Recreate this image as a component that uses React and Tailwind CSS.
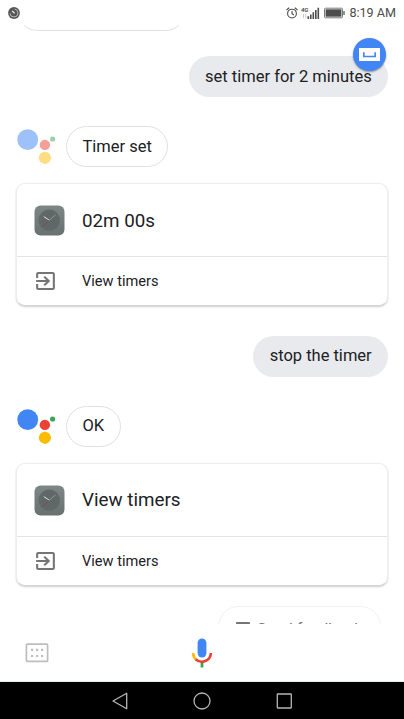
function AssistantLogo({ faded }) {
    return (
        <svg width="40" height="41" viewBox="0 0 40 41" className={`shrink-0 ${faded ? 'opacity-50' : ''}`}>
            <circle cx="11.7" cy="13.7" r="10.4" fill="#4285f4" />
            <circle cx="28.9" cy="18.9" r="5.2" fill="#ea4335" />
            <circle cx="36.6" cy="13" r="2.6" fill="#34a853" />
            <circle cx="28.9" cy="31.8" r="6.1" fill="#fbbc05" />
        </svg>
    )
}

function ClockIcon() {
    return (
        <svg width="31" height="31" viewBox="0 0 31 31" className="mt-px shrink-0">
            <defs>
                <linearGradient id="clock-bg" x1="0" y1="0" x2="0" y2="1">
                    <stop offset="0" stopColor="#7f8786" />
                    <stop offset="1" stopColor="#697170" />
                </linearGradient>
            </defs>
            <rect x="0.5" y="0.5" width="30" height="30" rx="6" fill="url(#clock-bg)" />
            <circle cx="15.3" cy="15.2" r="10.7" fill="#5f6767" />
            <circle cx="15.3" cy="15.2" r="9.7" fill="none" stroke="#7d8584" strokeWidth="0.8" strokeDasharray="0.7 4.38" />
            <path d="M9.8 11.6l5.5 3.6" stroke="#dcdfdf" strokeWidth="1" />
            <path d="M15.3 15.2l6.4-5.5" stroke="#a3a9a9" strokeWidth="0.7" />
            <path d="M15.3 15.2l-7 6.7" stroke="#8c4646" strokeWidth="0.9" />
        </svg>
    )
}

function OpenIcon() {
    return (
        <svg width="25" height="24" viewBox="0 0 24 24" preserveAspectRatio="none" fill="#757575" className="shrink-0">
            <path d="M10.09 15.59L11.5 17l5-5-5-5-1.41 1.41L12.67 11H3v2h9.67l-2.58 2.59zM19 3H5c-1.11 0-2 .9-2 2v4h2V5h14v14H5v-4H3v4c0 1.1.89 2 2 2h14c1.1 0 2-.9 2-2V5c0-1.1-.9-2-2-2z" />
        </svg>
    )
}

function StatusBar() {
    return (
        <header className="flex h-[25px] shrink-0 items-center justify-between bg-white pr-[8px] pl-2">
            <svg width="12" height="12" viewBox="0 0 12 12">
                <circle cx="6" cy="6" r="5.9" fill="#555" />
                <circle cx="6" cy="6" r="4" fill="none" stroke="#c4c4c4" strokeWidth="0.9" strokeDasharray="18 7" strokeDashoffset="6" />
                <path d="M4.2 3.8L6.6 6.4" stroke="#fff" strokeWidth="1.2" />
            </svg>
            <div className="flex items-center text-[#4d4d4d]">
                <svg width="12" height="12" viewBox="0 0 12 12" fill="none" stroke="currentColor">
                    <circle cx="6" cy="6.6" r="4.4" strokeWidth="1.1" />
                    <path d="M6 4.1v2.7l1.9 1.1M0.5 3L3.2 0.8M11.5 3L8.8 0.8" strokeWidth="1.1" />
                </svg>
                <svg width="19" height="12" viewBox="0 0 19 12" className="ml-[3px]" fill="currentColor">
                    <text x="0" y="5.2" className="font-[Roboto,sans-serif] text-[6px] font-bold italic">4G</text>
                    <path d="M2.5 7v4M4.8 7v4" stroke="#c5c5c5" strokeWidth="0.9" />
                    <path d="M6.5 9.3h1.6V12H6.5zM9 7.4h1.6V12H9zM11.5 5.2h1.6V12h-1.6zM14 3h1.6v9H14zM16.5 0.8h1.6V12h-1.6z" />
                </svg>
                <svg width="21" height="12" viewBox="0 0 21 12" className="ml-[4px]">
                    <rect x="0.5" y="1.2" width="18" height="9.6" rx="1" fill="none" stroke="#777" />
                    <rect x="1.6" y="2.3" width="15.8" height="7.4" fill="#4d4d4d" />
                    <path d="M20 4v4" stroke="#4d4d4d" strokeWidth="1.2" />
                </svg>
                <span className="ml-[4px] text-[12.6px] leading-[25px] whitespace-nowrap">8:19 AM</span>
            </div>
        </header>
    )
}

function UserBubble({ children }) {
    return (
        <div className="flex h-[41px] w-fit items-center self-end rounded-full bg-[#e8eaed] px-[16.3px] pt-px whitespace-nowrap">
            {children}
        </div>
    )
}

function Reply({ faded, children }) {
    return (
        <div className="flex gap-[10px]">
            <AssistantLogo faded={faded} />
            <div className="flex h-[41px] items-center rounded-full border border-[#dfe1e5] bg-white px-[15.4px] pt-px">{children}</div>
        </div>
    )
}

function TimerCard({ title }) {
    return (
        <section className="mt-4 flex h-[123px] flex-col rounded-[9px] border border-[#eeeeee] border-b-[#d6d6d6] bg-white shadow-[0_1px_2px_rgba(0,0,0,0.2)]">
            <div className="flex h-[73px] items-center gap-[17px] border-b border-[#e4e4e4] pl-[17px]">
                <ClockIcon />
                <h2 className="mt-[2px] text-[18.8px]">{title}</h2>
            </div>
            <div className="flex flex-1 items-center gap-[24px] pl-[16px]">
                <OpenIcon />
                <span className="mt-[2px] text-[14.6px]">View timers</span>
            </div>
        </section>
    )
}

function ShortcutBadge() {
    return (
        <button type="button" className="absolute top-[13px] right-[18px] flex size-[33px] items-center justify-center rounded-full bg-[#4285f4] shadow-[0_1px_2px_rgba(0,0,0,0.4)]">
            <svg width="21" height="13" viewBox="0 0 21 13" fill="none">
                <path d="M0 0h21v13H0z" fill="#fff" />
                <path d="M4.8 4.2v4.3h11.4V4.2" stroke="#4285f4" strokeWidth="1.7" />
            </svg>
        </button>
    )
}

function InputBar() {
    return (
        <footer className="grid h-[58px] shrink-0 grid-cols-3 items-center border-b border-[#e8eeea] bg-white px-[25px]">
            <svg width="24" height="20" viewBox="0 0 24 20">
                <rect x="1.4" y="1.2" width="21.2" height="17.2" rx="1" fill="none" stroke="#bdbdbd" strokeWidth="1.7" />
                <path d="M6 6.9h2.2M11 6.9h2.2M16 6.9h2.2M6 13h2.2M11 13h2.2M16 13h2.2" stroke="#bdbdbd" strokeWidth="2.2" />
            </svg>
            <svg width="22" height="30" viewBox="0 0 22 30" fill="none" className="justify-self-center">
                <rect x="6.6" y="0.5" width="8.8" height="19" rx="4.4" fill="#4285f4" />
                <path d="M11 24v5.5" stroke="#34a853" strokeWidth="2.8" />
                <path d="M2.1 15a8.9 8.9 0 0 0 2.8 6.5" stroke="#fbbc05" strokeWidth="2.6" />
                <path d="M4.7 21.2A9 9 0 0 0 19.9 15" stroke="#ea4335" strokeWidth="2.6" />
            </svg>
        </footer>
    )
}

function NavBar() {
    return (
        <nav className="flex h-[37px] shrink-0 items-center justify-center gap-[64px] bg-black">
            <svg width="18" height="18" viewBox="0 0 18 18" fill="none" stroke="#b5b5b5" strokeWidth="1.3">
                <path d="M15.7 1.2v15.6L2 9z" strokeLinejoin="round" />
            </svg>
            <svg width="18" height="18" viewBox="0 0 18 18" fill="none" stroke="#b5b5b5" strokeWidth="1.3">
                <circle cx="9" cy="9" r="8" />
            </svg>
            <svg width="18" height="18" viewBox="0 0 18 18" fill="none" stroke="#b5b5b5" strokeWidth="1.3">
                <rect x="2.3" y="2" width="14" height="14" rx="0.5" />
            </svg>
        </nav>
    )
}

export default function App() {
    return (
        <div className="flex h-[719px] w-[404px] flex-col overflow-hidden bg-white font-[Roboto,sans-serif] text-[#202124]">
            <StatusBar />
            <main className="relative flex h-[599px] shrink-0 flex-col overflow-hidden px-4 text-[16.5px]">
                <div className="-mt-[35px] ml-px h-[41px] w-[169px] shrink-0 rounded-full border border-[#dfe1e5]" />
                <div className="mt-[25px] flex flex-col">
                    <UserBubble>set timer for 2 minutes</UserBubble>
                    <div className="mt-[29px]">
                        <Reply faded>Timer set</Reply>
                        <TimerCard title="02m 00s" />
                    </div>
                </div>
                <div className="mt-[29.5px] flex flex-col">
                    <UserBubble>stop the timer</UserBubble>
                    <div className="mt-[29px]">
                        <Reply>OK</Reply>
                        <TimerCard title="View timers" />
                    </div>
                </div>
                <div className="mt-[20.5px] mr-[7px] flex h-[41px] w-[163px] shrink-0 items-center gap-[7px] self-end rounded-full border border-[#f1f1f1] pl-[17px] text-[16px] whitespace-nowrap text-[#757575]">
                    <svg width="14" height="14" viewBox="0 0 14 14" fill="#757575" className="mt-[4px] shrink-0">
                        <path d="M1 0h12a1 1 0 0 1 1 1v9a1 1 0 0 1-1 1H3l-3 3V1a1 1 0 0 1 1-1z" />
                    </svg>
                    <span className="mt-[6px]">Send feedback</span>
                </div>
                <ShortcutBadge />
            </main>
            <InputBar />
            <NavBar />
        </div>
    )
}
